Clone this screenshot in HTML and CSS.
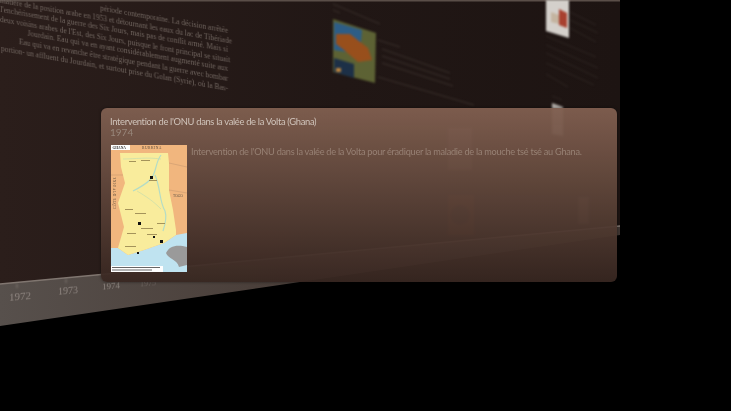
FILE: index.html
```html
<!DOCTYPE html>
<html lang="fr">
<head>
    <meta charset="UTF-8">
    <title>Frise chronologique</title>
    <link rel="stylesheet" href="styles.css">
</head>
<body>
    <div class="scene">
        <svg class="scene-art" width="731" height="411" viewBox="0 0 731 411">
            <defs>
                <linearGradient id="wallFill" x1="0" y1="0" x2="1" y2="0">
                    <stop offset="0" stop-color="#2b1e1b"/>
                    <stop offset="0.55" stop-color="#211715"/>
                    <stop offset="1" stop-color="#1d1412"/>
                </linearGradient>
                <linearGradient id="bandFill" x1="0" y1="0" x2="1" y2="0">
                    <stop offset="0" stop-color="#57504c"/>
                    <stop offset="0.4" stop-color="#4b403b"/>
                    <stop offset="1" stop-color="#3e3531"/>
                </linearGradient>
            </defs>
            <polygon points="0,0 620,0 620,228 0,284" fill="url(#wallFill)"/>
            <rect x="0" y="0" width="620" height="1.5" fill="#5a4e48"/>
            <polygon points="0,284 620,226 620,235 0,326" fill="url(#bandFill)"/>
            <line x1="0" y1="284" x2="620" y2="226" stroke="#807670" stroke-width="1.5"/>
            <g class="blurred">
                <line x1="17" y1="284" x2="17" y2="288" stroke="#837a75"/>
                <line x1="66" y1="279" x2="66" y2="283" stroke="#837a75"/>

                <!-- carte de la Turquie -->
                <g class="thumb">
                    <polygon points="333,19 376,33 375,83 333,72" fill="#68703a"/>
                    <polygon points="334,22 362,30 360,54 334,50" fill="#2f6a9a"/>
                    <polygon points="336,34 350,34 368,48 372,60 358,62 344,50 336,44" fill="#ad5a1e"/>
                    <polygon points="334,58 354,64 354,78 334,72" fill="#1d3550"/>
                    <rect x="336" y="68" width="5" height="4" fill="#d49645"/>
                </g>
                <g stroke="#3b312d" stroke-width="1">
                    <line x1="333" y1="4" x2="380" y2="24"/>
                    <line x1="333" y1="10" x2="340" y2="13"/>
                    <line x1="378" y1="40" x2="400" y2="47"/>
                    <line x1="382" y1="49" x2="450" y2="73"/>
                    <line x1="382" y1="56" x2="450" y2="79"/>
                    <line x1="382" y1="63" x2="453" y2="86"/>
                    <line x1="378" y1="77" x2="474" y2="105"/>
                </g>

                <!-- affiche a droite -->
                <polygon points="546,0 569,0 569,38 546,31" fill="#d4d0cb"/>
                <polygon points="559,9 567,13 567,28 559,25" fill="#a8402f"/>
                <polygon points="551,12 559,15 559,24 551,22" fill="#c4b4a0"/>
                <g stroke="#2f2623" stroke-width="1">
                    <line x1="570" y1="12" x2="596" y2="25"/>
                    <line x1="570" y1="20" x2="598" y2="33"/>
                    <line x1="570" y1="28" x2="596" y2="42"/>
                    <line x1="546" y1="36" x2="596" y2="57"/>
                    <line x1="546" y1="45" x2="598" y2="68"/>
                    <line x1="546" y1="53" x2="598" y2="78"/>
                    <line x1="546" y1="63" x2="594" y2="85"/>
                    <line x1="546" y1="74" x2="568" y2="87"/>
                    <line x1="552" y1="96" x2="562" y2="100"/>
                </g>
                <polygon points="552,103 563,107 563,136 552,134" fill="#b5b0ab"/>

                <!-- vignettes sous le panneau -->
                <g class="faint">
                    <rect x="448" y="128" width="24" height="42" fill="#d7c5b4"/>
                    <rect x="448" y="195" width="26" height="40" fill="#b5602c"/>
                    <circle cx="460" cy="215" r="10" fill="#2a1d18"/>
                    <rect x="578" y="197" width="11" height="27" fill="#d3bda9"/>
                </g>
            </g>
        </svg>

        <div class="wall-text">
            <div>période contemporaine. La décision arrêtée</div>
            <div>matière de la position arabe en 1953 et détournant les eaux du lac de Tibériade</div>
            <div>l'enchérissement de la guerre des Six Jours, mais pas de conflit armé. Mais si</div>
            <div>deux voisins arabes de l'Est, des Six Jours, puisque le front principal se situait</div>
            <div>Jourdain. Eau qui va en ayant considérablement augmenté suite aux</div>
            <div>Eau qui va en revanche être stratégique pendant la guerre avec bombar</div>
            <div>portion- un affluent du Jourdain, et surtout prise du Golan (Syrie), où la Bas-</div>
        </div>

        <div class="year year-72">1972</div>
        <div class="year year-73">1973</div>
        <div class="year year-74">1974</div>
        <div class="year year-75">1975</div>

        <div class="panel">
            <div class="panel-title">Intervention de l'ONU dans la valée de la Volta (Ghana)</div>
            <div class="panel-year">1974</div>
            <div class="panel-body">
                <svg class="map" width="76" height="127" viewBox="0 0 76 127">
                    <rect width="76" height="127" fill="#f1b67e"/>
                    <polygon points="0,103 7,103 17,110 33,105 53,98 65,90 76,88 76,127 0,127" fill="#bfe3f0"/>
                    <polygon points="9,8 57,8 58,18 58,45 62,65 65,85 65,90 53,98 33,105 17,110 7,103 13,82 7,58 14,38 10,22" fill="#f9ec9c"/>
                    <path d="M50 10 C44 18 46 26 40 34 C34 40 26 44 22 46 M44 30 C50 44 48 56 54 66 C56 72 54 80 52 86" fill="none" stroke="#b4dcc6" stroke-width="1.2"/>
                    <path d="M12 14 C24 14 36 12 50 14 M26 46 C36 52 42 56 50 64" fill="none" stroke="#c6dcae" stroke-width="0.7"/>
                    <path d="M58 18 L76 22 M58 45 L76 48 M0 30 L12 30" stroke="#c99a70" stroke-width="0.6"/>
                    <path d="M55 108 C58 101 66 99 76 102 L76 120 L68 122 C66 114 57 114 55 108 Z" fill="#9a9a9a"/>
                    <rect x="39" y="31" width="3" height="3" fill="#111"/>
                    <rect x="27" y="77" width="3" height="3" fill="#111"/>
                    <rect x="49" y="95" width="3" height="3" fill="#111"/>
                    <rect x="42" y="91" width="2" height="2" fill="#111"/>
                    <rect x="26" y="107" width="2" height="2" fill="#111"/>
                    <g fill="#a4935a">
                        <rect x="18" y="16" width="7" height="1"/>
                        <rect x="30" y="15" width="9" height="1"/>
                        <rect x="14" y="64" width="8" height="1"/>
                        <rect x="24" y="68" width="11" height="1"/>
                        <rect x="30" y="83" width="12" height="1"/>
                        <rect x="16" y="88" width="9" height="1"/>
                        <rect x="36" y="89" width="10" height="1"/>
                        <rect x="14" y="101" width="11" height="1"/>
                        <rect x="46" y="78" width="8" height="1"/>
                        <rect x="38" y="35" width="8" height="1"/>
                    </g>
                    <rect x="0" y="0" width="19" height="5" fill="#fff"/>
                    <text class="map-label" x="1.5" y="4">GHANA</text>
                    <text class="map-label map-label-wide" x="31" y="4">BURKINA</text>
                    <text class="map-label map-label-thin" x="62" y="52">TOGO</text>
                    <text class="map-label map-label-wide" transform="translate(5 64) rotate(-90)">CÔTE D'IVOIRE</text>
                    <rect x="0" y="121" width="52" height="6" fill="#ffffff"/>
                    <rect x="1" y="122" width="48" height="1" fill="#666"/>
                    <rect x="1" y="124.5" width="40" height="1" fill="#666"/>
                </svg>
                <p class="panel-text">Intervention de l'ONU dans la valée de la Volta pour éradiquer la maladie de la mouche tsé tsé au Ghana.</p>
            </div>
        </div>
    </div>
</body>
</html>
```

FILE: styles.css
```css
body {
    margin: 0;
    background-color: #000000;
}

.scene {
    position: relative;
    width: 731px;
    height: 411px;
    overflow: hidden;
    background-color: #000000;
    font-family: 'Lato', sans-serif;
}

.scene-art {
    position: absolute;
    left: 0;
    top: 0;
}

.blurred {
    filter: blur(0.8px);
}

.thumb {
    opacity: 0.85;
}

.faint {
    opacity: 0.35;
}

.wall-text {
    position: absolute;
    left: 0;
    top: 26px;
    width: 228px;
    text-align: right;
    white-space: nowrap;
    font-family: 'Liberation Serif', serif;
    font-size: 7.4px;
    line-height: 9.6px;
    color: #70655f;
    filter: blur(0.5px);
    transform: skewY(10deg);
    transform-origin: right top;
}

.year {
    position: absolute;
    font-family: 'Liberation Serif', serif;
    color: #8f8681;
    filter: blur(0.5px);
    transform: skewY(-5deg);
}

.year-72 {
    left: 9px;
    top: 290px;
    font-size: 11px;
}

.year-73 {
    left: 58px;
    top: 285px;
    font-size: 10px;
}

.year-74 {
    left: 102px;
    top: 281px;
    font-size: 9px;
}

.year-75 {
    left: 140px;
    top: 279px;
    font-size: 8px;
    color: #6f6561;
}

.panel {
    position: absolute;
    left: 101px;
    top: 108px;
    width: 516px;
    height: 174px;
    box-sizing: border-box;
    padding: 8px 9px;
    border-radius: 6px;
    background: linear-gradient(to bottom, rgba(128, 95, 80, 0.96), rgba(56, 39, 33, 0.94));
    box-shadow: 0 0 3px rgba(0, 0, 0, 0.5);
}

.panel-title {
    font-size: 9.4px;
    line-height: 11px;
    letter-spacing: -0.33px;
    color: #d0c4bb;
    filter: blur(0.25px);
}

.panel-year {
    font-size: 10px;
    line-height: 11px;
    color: #98877b;
    filter: blur(0.25px);
}

.panel-body {
    display: flex;
    align-items: flex-start;
    margin-top: 7px;
}

.map {
    display: block;
    flex-shrink: 0;
    margin-left: 1px;
    filter: blur(0.3px);
}

.map-label {
    font-family: 'Liberation Serif', serif;
    font-size: 3.6px;
    font-weight: bold;
    fill: #333333;
}

.map-label-wide {
    font-weight: normal;
    letter-spacing: 0.5px;
    fill: #5a4a3a;
}

.map-label-thin {
    font-weight: normal;
    fill: #6a5a4a;
}

.panel-text {
    margin: 1px 0 0 4px;
    font-size: 9.2px;
    line-height: 12px;
    letter-spacing: -0.27px;
    color: #978174;
    white-space: nowrap;
    filter: blur(0.25px);
}
```
